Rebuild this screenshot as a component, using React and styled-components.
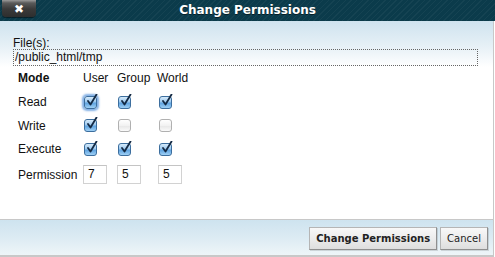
import React from "react";
import styled, { createGlobalStyle } from "styled-components";

const Global = createGlobalStyle`
  html, body { margin: 0; padding: 0; background: #fff; }
  body { width: 495px; height: 257px; overflow: hidden; }
`;

const Dialog = styled.div`
  width: 495px;
  height: 257px;
  display: flex;
  flex-direction: column;
  font-family: "Liberation Sans", Arial, sans-serif;
  color: #111;
`;

const TitleBar = styled.div`
  height: 21px;
  flex: none;
  display: grid;
  grid-template-columns: 1fr auto 1fr;
  align-items: start;
  background-color: #0b3b4b;
  background-image: repeating-linear-gradient(
    135deg,
    rgba(255, 255, 255, 0.04) 0px,
    rgba(255, 255, 255, 0.04) 1px,
    transparent 1px,
    transparent 4px
  );
`;

const CloseButton = styled.button`
  justify-self: start;
  margin-left: 2px;
  width: 34px;
  height: 17px;
  padding: 0;
  border: none;
  border-radius: 0 0 4px 4px;
  background: linear-gradient(#9a9a9a 0, #5a5a5a 3px, #3a3a3a 9px, #2e2e2e 100%);
  box-shadow: 0 1px 1px rgba(0, 0, 0, 0.5);
  color: #fff;
  font: bold 12px "DejaVu Sans", sans-serif;
  line-height: 16px;
  display: flex;
  align-items: center;
  justify-content: center;
`;

const Title = styled.div`
  color: #fff;
  font: bold 12px "DejaVu Sans", Verdana, sans-serif;
  line-height: 20px;
  text-shadow: 0 1px 0 rgba(0, 0, 0, 0.5);
`;

const Main = styled.div`
  flex: 1;
  width: 493px;
  border-right: 1px solid #c8c8c8;
  display: flex;
  flex-direction: column;
`;

const Body = styled.div`
  flex: 1;
  background: linear-gradient(#cfe3ef 0, #e6f0f6 25px, #ffffff 46px);
  padding: 16px 15px 0 13px;
`;

const FileLabel = styled.div`
  font-size: 12px;
  line-height: 12px;
`;

const PathBox = styled.div`
  height: 15px;
  border: 1px dotted #666;
  font-size: 12px;
  line-height: 15px;
  padding-left: 1px;
`;

const Grid = styled.div`
  margin-top: 0;
  margin-left: 5px;
  display: grid;
  grid-template-columns: 65px 34px 40px auto;
  grid-template-rows: 24px 24px 23px 24px 27px;
  align-items: center;
  font-size: 12px;
`;

const Cell = styled.div`
  font-weight: ${(p) => (p.$bold ? "bold" : "normal")};
  padding-left: ${(p) => (p.$pad ? p.$pad : 0)}px;
  display: flex;
  align-items: center;
`;

const Box = styled.span`
  display: inline-block;
  width: 13px;
  height: 13px;
  position: relative;
  border-radius: 3px;
  box-sizing: border-box;
  border: 1px solid ${(p) => (p.$checked ? "#3c6e9e" : "#b0b0b0")};
  background: ${(p) =>
    p.$checked
      ? "linear-gradient(#d6ebfb 0, #9cc8ee 45%, #5fa3e0 55%, #9fd0f5 100%)"
      : "linear-gradient(#ffffff 0, #f2f2f2 50%, #e8e8e8 55%, #fafafa 100%)"};
  box-shadow: ${(p) =>
    p.$focus ? "0 0 2px 2px rgba(90, 150, 220, 0.75)" : "none"};
`;

const Check = styled.svg`
  position: absolute;
  left: 1px;
  top: -3px;
`;

const CheckBox = ({ checked, focus }) => (
  <Box $checked={checked} $focus={focus}>
    {checked && (
      <Check width="12" height="13" viewBox="0 0 12 13">
        <path
          d="M2 7 L4.5 10.5 L10.5 0.5"
          fill="none"
          stroke="#142a44"
          strokeWidth="1.8"
          strokeLinecap="round"
          strokeLinejoin="round"
        />
      </Check>
    )}
  </Box>
);

const NumInput = styled.div`
  width: 24px;
  height: 19px;
  box-sizing: border-box;
  border: 1px solid #d2d2d2;
  border-top-color: #c4c4c4;
  font-size: 12px;
  line-height: 17px;
  padding-left: 4px;
  margin-left: ${(p) => p.$ml || 0}px;
`;

const Footer = styled.div`
  height: 35px;
  flex: none;
  border-top: 1px solid #c8c8c8;
  border-bottom: 2px solid #c8c8c8;
  background: linear-gradient(#cee3ef 0, #dcebf3 50%, #eef5f8 100%);
  display: flex;
  align-items: center;
  justify-content: flex-end;
  gap: 3px;
  padding-right: 5px;
`;

const Button = styled.button`
  height: 23px;
  margin-top: 2px;
  padding: 0 ${(p) => (p.$primary ? 6 : 6)}px;
  border: 1px solid #b5b5b5;
  border-right-color: #8f8f8f;
  border-bottom-color: #8f8f8f;
  background: linear-gradient(#f8f8f8 0, #ececec 50%, #dedede 100%);
  color: #222;
  font-family: "DejaVu Sans", Verdana, sans-serif;
  font-size: 10px;
  font-weight: ${(p) => (p.$primary ? "bold" : "normal")};
  box-shadow: 1px 1px 0 rgba(0, 0, 0, 0.12);
`;

const perms = [
  ["Read", [true, true, true]],
  ["Write", [true, false, false]],
  ["Execute", [true, true, true]],
];

export default function App() {
  return (
    <>
      <Global />
      <Dialog>
        <TitleBar>
          <CloseButton>✖</CloseButton>
          <Title>Change Permissions</Title>
          <span />
        </TitleBar>
        <Main>
          <Body>
            <FileLabel>File(s):</FileLabel>
            <PathBox>/public_html/tmp</PathBox>
            <Grid>
              <Cell $bold>Mode</Cell>
              <Cell>User</Cell>
              <Cell>Group</Cell>
              <Cell>World</Cell>
              {perms.map(([label, vals], r) => (
                <React.Fragment key={label}>
                  <Cell>{label}</Cell>
                  {vals.map((v, i) => (
                    <Cell key={i} $pad={i === 2 ? 2 : 1}>
                      <CheckBox checked={v} focus={r === 0 && i === 0} />
                    </Cell>
                  ))}
                </React.Fragment>
              ))}
              <Cell>Permission</Cell>
              <Cell>
                <NumInput>7</NumInput>
              </Cell>
              <Cell>
                <NumInput>5</NumInput>
              </Cell>
              <Cell>
                <NumInput $ml={1}>5</NumInput>
              </Cell>
            </Grid>
          </Body>
          <Footer>
            <Button $primary>Change Permissions</Button>
            <Button>Cancel</Button>
          </Footer>
        </Main>
      </Dialog>
    </>
  );
}
